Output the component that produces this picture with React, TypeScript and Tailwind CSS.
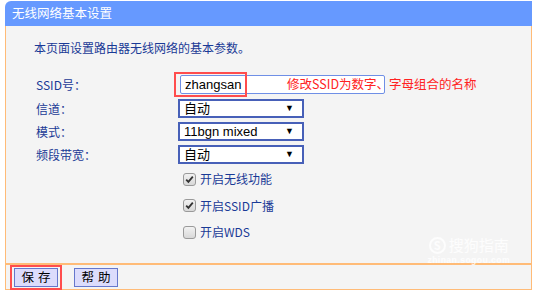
import React from 'react';

const cjk = "font-['Noto_Sans_CJK_SC',sans-serif]";
const latin = "font-['Liberation_Sans','Noto_Sans_CJK_SC',sans-serif]";

const rows = [
  { label: 'SSID号：', kind: 'input', value: 'zhangsan' },
  { label: '信道：', kind: 'select', value: '自动' },
  { label: '模式：', kind: 'select', value: '11bgn mixed' },
  { label: '频段带宽：', kind: 'select', value: '自动' },
];

const checks = [
  { label: '开启无线功能', checked: true },
  { label: '开启SSID广播', checked: true },
  { label: '开启WDS', checked: false },
];

function CheckBox({ checked }: { checked: boolean }) {
  return (
    <span className="w-[13px] h-[13px] rounded-[3px] border border-[#9a9a9a] bg-gradient-to-b from-[#f2f2f2] to-[#d8d8d8] flex items-center justify-center shrink-0">
      {checked && (
        <svg width="9" height="9" viewBox="0 0 9 9">
          <path d="M1.2 4.6 L3.4 6.9 L7.8 1.6" fill="none" stroke="#333" strokeWidth="1.8" />
        </svg>
      )}
    </span>
  );
}

export default function App() {
  return (
    <div className={`w-[534px] h-[290px] bg-white overflow-hidden ${cjk}`}>
      <div className="ml-[5px] mt-[1px] w-[527px] h-[289px] flex flex-col">
        {/* Title bar */}
        <div className="h-[25px] shrink-0 bg-[#6699ff] rounded-tl-[6px] flex items-center pl-[7px] text-white text-[12.5px]">
          无线网络基本设置
        </div>

        {/* Body */}
        <div className="flex-1 relative bg-[#f4f4f4] border-l border-r border-[#ffbb77]">
          <p className="mt-[14px] pl-[28px] text-[12px] leading-[16px] text-[#1a3a96]">
            本页面设置路由器无线网络的基本参数。
          </p>

          <div className="mt-[19px] flex flex-col gap-[4px]">
            {rows.map((r, i) => (
              <div key={i} className={`flex items-center h-[19px] ${i === 1 ? 'mt-[1px]' : ''}`}>
                <span className="w-[172px] pl-[30px] shrink-0 text-[12px] text-[#1a3a96]">{r.label}</span>
                {r.kind === 'input' ? (
                  <div className="relative">
                    <div className={`w-[205px] h-[19px] ml-[2px] border border-[#6f8fe6] rounded-[2px] bg-white flex items-center pl-[4px] text-[13px] text-black ${latin}`}>
                      {r.value}
                    </div>
                    <div className="absolute left-[-4px] top-[-3px] w-[73px] h-[25px] border-2 border-[#ff4d4d]" />
                    <span className="absolute left-[109px] top-[-1px] whitespace-nowrap text-[12.5px] leading-[19px] text-[#ff2222]">
                      修改SSID为数字、字母组合的名称
                    </span>
                  </div>
                ) : (
                  <div className={`w-[126px] h-[19px] border-2 border-[#4760b8] bg-white flex items-center justify-between pl-[4px] pr-[8px] text-[13px] text-black ${latin}`}>
                    <span>{r.value}</span>
                    <span className="text-[9px]">▼</span>
                  </div>
                )}
              </div>
            ))}
          </div>

          <div className="mt-[5px] flex flex-col gap-[6.5px] pl-[177px]">
            {checks.map((c, i) => (
              <div key={i} className="h-[20px] flex items-center gap-[4px]">
                <CheckBox checked={c.checked} />
                <span className="text-[12px] text-[#1a3a96]">{c.label}</span>
              </div>
            ))}
          </div>

          {/* Watermark */}
          <div className="absolute right-[21px] bottom-[-4px] flex flex-col items-center text-white/80">
            <div className="flex items-center gap-[3px]">
              <span className="w-[17px] h-[17px] rounded-full border-2 border-white/80 flex items-center justify-center text-[11px] font-bold leading-none">S</span>
              <span className="text-[15px] leading-[18px]">搜狗指南</span>
            </div>
            <span className={`text-[8.5px] font-bold tracking-[0.5px] ${latin}`}>zhinan.sogou.com</span>
          </div>
        </div>

        {/* Footer */}
        <div className="h-[27px] shrink-0 bg-[#f4f4f4] border-t-2 border-b border-l border-r border-[#ffbb77] flex items-center pl-[8px] gap-[16px]">
          <div className="relative">
            <button className="w-[44px] h-[19px] bg-[#dcdcfc] border border-[#6677cc] flex items-center justify-center gap-[4px] text-[12.5px] leading-none text-black">
              <span>保</span><span>存</span>
            </button>
            <div className="absolute left-[-4px] top-[-3px] w-[52px] h-[25px] border-2 border-[#ff4d4d]" />
          </div>
          <button className="w-[44px] h-[19px] bg-[#dcdcfc] border border-[#6677cc] flex items-center justify-center gap-[4px] text-[12.5px] leading-none text-black">
            <span>帮</span><span>助</span>
          </button>
        </div>
      </div>
    </div>
  );
}
